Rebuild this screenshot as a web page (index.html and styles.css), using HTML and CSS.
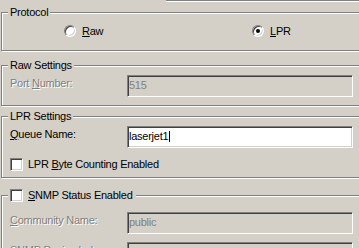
FILE: index.html
```html
<!DOCTYPE html>
<html lang="en">
<head>
    <meta charset="UTF-8">
    <meta name="viewport" content="width=device-width, initial-scale=1.0">
    <title>Port Settings</title>
    <link rel="stylesheet" href="styles.css">
</head>
<body>
    <div class="top-edge"></div>

    <fieldset class="group group-protocol">
        <legend>Protocol</legend>
        <div class="radio-row">
            <label class="radio-option"><span class="radio"></span><span><u>R</u>aw</span></label>
            <label class="radio-option"><span class="radio checked"></span><span><u>L</u>PR</span></label>
        </div>
    </fieldset>

    <fieldset class="group group-raw">
        <legend>Raw Settings</legend>
        <div class="field-row">
            <span class="field-label disabled">Port <u>N</u>umber:</span>
            <div class="edit disabled">515</div>
        </div>
    </fieldset>

    <fieldset class="group group-lpr">
        <legend>LPR Settings</legend>
        <div class="field-row">
            <span class="field-label"><u>Q</u>ueue Name:</span>
            <div class="edit">laserjet1<span class="caret"></span></div>
        </div>
        <label class="check-option check-row"><span class="check"></span><span>LPR <u>B</u>yte Counting Enabled</span></label>
    </fieldset>

    <fieldset class="group group-snmp">
        <legend><label class="check-option"><span class="check"></span><span><u>S</u>NMP Status Enabled</span></label></legend>
        <div class="field-row">
            <span class="field-label disabled"><u>C</u>ommunity Name:</span>
            <div class="edit disabled">public</div>
        </div>
        <div class="field-row next-row">
            <span class="field-label disabled">SNMP <u>D</u>evice Index:</span>
            <div class="edit disabled">1</div>
        </div>
    </fieldset>
</body>
</html>
```

FILE: styles.css
```css
body {
    margin: 0;
    background-color: #d4d0c8;
    color: #000;
    font-family: "Liberation Sans", Arial, sans-serif;
    font-size: 11px;
    line-height: 13px;
    letter-spacing: -0.25px;
    overflow: hidden;
    height: 248px;
}
.top-edge {
    margin-left: 166px;
    height: 1px;
    background-color: #808080;
    border-bottom: 1px solid #fff;
}
.group {
    margin: 0 -30px 0 1px;
    padding: 0 0 0 6px;
    border: 1px solid #808080;
    box-shadow: inset 1px 1px 0 #fff, 1px 1px 0 #fff;
    min-width: 0;
}
legend {
    padding: 0 2px;
    line-height: 13px;
    background-color: #d4d0c8;
}
.group-protocol {
    margin-top: 4px;
    padding-bottom: 12px;
}
.group-raw {
    margin-top: 8px;
    padding-bottom: 8px;
}
.group-lpr {
    margin-top: 4px;
    padding-bottom: 6px;
}
.group-snmp {
    margin-top: 11px;
}
.group-snmp legend {
    padding: 0 3px 0 2px;
}
.radio-row {
    display: flex;
    padding: 6px 0 0 56px;
}
.radio-option {
    display: flex;
    align-items: flex-start;
    gap: 6px;
}
.radio-option:first-child {
    width: 188px;
}
.radio {
    width: 10px;
    height: 10px;
    border: 1px solid;
    border-color: #808080 #fff #fff #808080;
    border-radius: 50%;
    background-color: #fff;
    box-shadow: inset 1px 1px 0 #404040, inset -1px -1px 0 #d4d0c8;
    position: relative;
}
.radio.checked::after {
    content: "";
    position: absolute;
    left: 3px;
    top: 3px;
    width: 4px;
    height: 4px;
    border-radius: 50%;
    background-color: #000;
}
.field-row {
    display: grid;
    grid-template-columns: 119px 226px;
    align-items: start;
}
.group-raw .field-row,
.group-lpr .field-row {
    padding-top: 3px;
}
.group-snmp .field-row {
    padding-top: 10px;
}
.group-snmp .next-row {
    padding-top: 8px;
}
.field-label {
    padding-left: 2px;
    margin-top: 2px;
}
.disabled {
    color: #808080;
    text-shadow: 1px 1px 0 #fff;
}
.edit {
    box-sizing: border-box;
    height: 22px;
    padding: 3px 1px 0;
    border: 1px solid;
    border-color: #808080 #fff #fff #808080;
    box-shadow: inset 1px 1px 0 #404040, inset -1px -1px 0 #d4d0c8;
    background-color: #fff;
    white-space: nowrap;
    overflow: hidden;
}
.edit.disabled {
    background-color: #d4d0c8;
    text-shadow: none;
}
.caret {
    display: inline-block;
    width: 1px;
    height: 11px;
    margin-left: 1px;
    background-color: #000;
    vertical-align: -2px;
}
.check-option {
    display: flex;
    align-items: center;
    gap: 5px;
    height: 13px;
}
.check-row {
    margin: 10px 0 0 2px;
}
.check {
    box-sizing: border-box;
    width: 13px;
    height: 13px;
    border: 1px solid;
    border-color: #808080 #fff #fff #808080;
    box-shadow: inset 1px 1px 0 #404040, inset -1px -1px 0 #d4d0c8;
    background-color: #fff;
}
```
